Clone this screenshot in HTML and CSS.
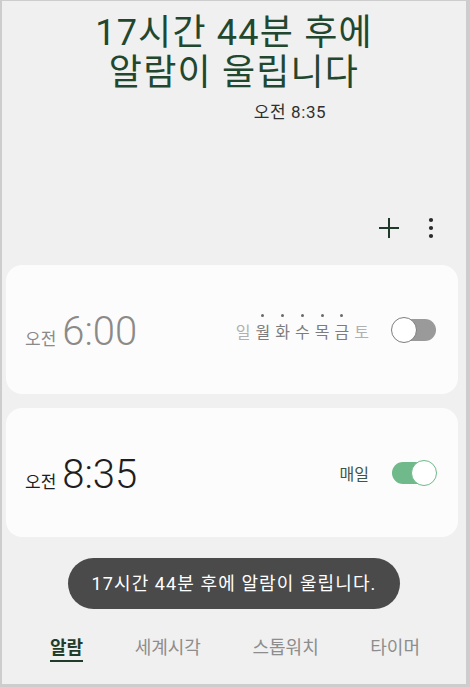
FILE: index.html
```html
<!DOCTYPE html>
<html lang="ko">
<head>
    <meta charset="UTF-8">
    <meta name="viewport" content="width=device-width, initial-scale=1.0">
    <title>알람</title>
    <link rel="stylesheet" href="styles.css">
</head>
<body>
    <div class="screen">
        <header class="summary">
            <h1 class="summary-title">17시간 44분 후에<br>알람이 울립니다</h1>
            <p class="summary-time">오전 8:35</p>
        </header>

        <div class="toolbar">
            <svg class="icon-add" width="22" height="22" viewBox="0 0 22 22">
                <path d="M11 1v20M1 11h20" stroke="#1f3a2a" stroke-width="2" fill="none"/>
            </svg>
            <svg class="icon-more" width="6" height="22" viewBox="0 0 6 22">
                <circle cx="3" cy="3" r="2.1" fill="#2a2a2a"/>
                <circle cx="3" cy="11" r="2.1" fill="#2a2a2a"/>
                <circle cx="3" cy="19" r="2.1" fill="#2a2a2a"/>
            </svg>
        </div>

        <div class="alarm-card off">
            <div class="alarm-time">
                <span class="ampm">오전</span>
                <span class="clock">6:00</span>
            </div>
            <div class="alarm-right">
                <div class="days">
                    <span class="day">일</span>
                    <span class="day on">월</span>
                    <span class="day on">화</span>
                    <span class="day on">수</span>
                    <span class="day on">목</span>
                    <span class="day on">금</span>
                    <span class="day">토</span>
                </div>
                <span class="switch"></span>
            </div>
        </div>

        <div class="alarm-card active">
            <div class="alarm-time">
                <span class="ampm">오전</span>
                <span class="clock">8:35</span>
            </div>
            <div class="alarm-right">
                <span class="repeat">매일</span>
                <span class="switch checked"></span>
            </div>
        </div>

        <div class="toast">17시간 44분 후에 알람이 울립니다.</div>

        <nav class="tabs">
            <span class="tab current">알람</span>
            <span class="tab">세계시각</span>
            <span class="tab">스톱워치</span>
            <span class="tab">타이머</span>
        </nav>
    </div>
</body>
</html>
```

FILE: styles.css
```css
* {
    box-sizing: border-box;
}
body {
    margin: 0;
    background-color: #d2d2d2;
    font-family: Roboto, "Noto Sans CJK KR", sans-serif;
}
.screen {
    width: 470px;
    height: 687px;
    background-color: #f0f0f0;
    border-style: solid;
    border-color: #cdcdcd;
    border-width: 1px 4px 3px 2px;
    overflow: hidden;
}

/* top summary */
.summary {
    padding-top: 12px;
    text-align: center;
}
.summary-title {
    margin: 0;
    font-size: 36px;
    font-weight: 400;
    line-height: 40px;
    letter-spacing: 1.2px;
    color: #22472f;
}
.summary-time {
    margin: 9px 0 0;
    padding-left: 112px;
    font-size: 17px;
    line-height: 20px;
    letter-spacing: 0.6px;
    color: #2f2f2f;
}

/* add / more buttons */
.toolbar {
    display: flex;
    justify-content: flex-end;
    align-items: center;
    gap: 28px;
    height: 44px;
    margin-top: 84px;
    padding-right: 32px;
}

/* alarm cards */
.alarm-card {
    display: flex;
    align-items: center;
    justify-content: space-between;
    height: 129px;
    margin: 15px 8px 0 4px;
    padding: 0 22px 0 19px;
    background-color: #fcfcfc;
    border-radius: 16px;
}
.alarm-card + .alarm-card {
    margin-top: 14px;
}
.alarm-time {
    display: flex;
    align-items: baseline;
    gap: 6px;
    padding-top: 4px;
}
.ampm {
    font-size: 17px;
}
.clock {
    font-size: 40px;
    font-weight: 300;
    line-height: 1;
}
.off .ampm,
.off .clock {
    color: #8a8a8a;
}
.active .ampm,
.active .clock {
    color: #1e1e1e;
}
.alarm-right {
    display: flex;
    align-items: center;
    gap: 23px;
}
.days {
    display: flex;
    gap: 5px;
    padding-top: 2px;
}
.day {
    position: relative;
    font-size: 16px;
    color: #b0b0b0;
}
.day.on {
    color: #7c7c7c;
}
.day.on::before {
    content: "";
    position: absolute;
    top: -5px;
    left: 50%;
    width: 3px;
    height: 3px;
    margin-left: -1.5px;
    border-radius: 50%;
    background-color: #6a6a6a;
}
.repeat {
    font-size: 16px;
    color: #3b5646;
}

/* on/off switch */
.switch {
    position: relative;
    display: block;
    width: 44px;
    height: 22px;
    border-radius: 11px;
    background-color: #9a9a9a;
}
.switch::after {
    content: "";
    position: absolute;
    top: -2px;
    left: -1px;
    width: 26px;
    height: 26px;
    border-radius: 50%;
    background-color: #fff;
    border: 1.5px solid #7d7d7d;
    box-sizing: border-box;
}
.switch.checked {
    background-color: #6fb98a;
}
.switch.checked::after {
    left: auto;
    right: -1px;
    border-color: #6fb98a;
}

/* snackbar */
.toast {
    width: 332px;
    height: 51px;
    margin: 21px 0 0 66px;
    border-radius: 26px;
    background-color: #4a4a4a;
    color: #fff;
    font-size: 18px;
    line-height: 51px;
    letter-spacing: 1.1px;
    text-align: center;
}

/* bottom tabs */
.tabs {
    display: flex;
    justify-content: space-between;
    margin-top: 28px;
    padding: 0 46px 0 48px;
}
.tab {
    font-size: 18px;
    line-height: 22px;
    color: #8d8d8d;
    padding-bottom: 1px;
}
.tab.current {
    color: #1f3d2a;
    font-weight: 700;
    border-bottom: 2px solid #1f3d2a;
}
```
